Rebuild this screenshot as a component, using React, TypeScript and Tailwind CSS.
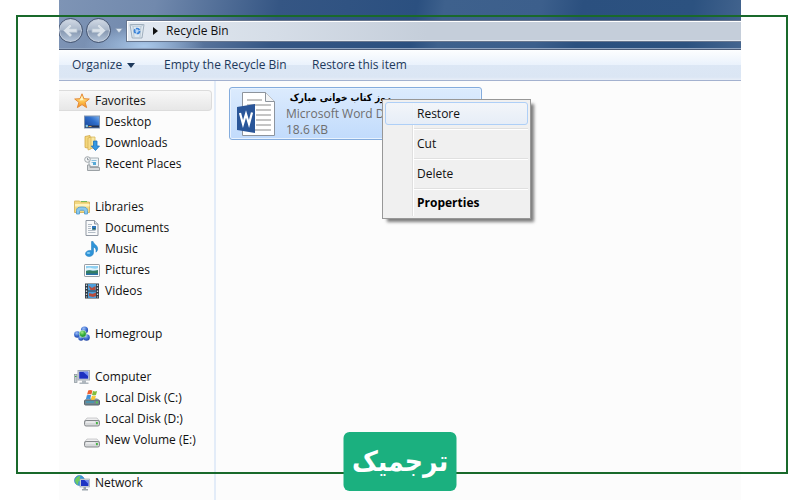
import type { ReactNode } from 'react';

function Svg({ children, size = 16 }: { children: ReactNode; size?: number }) {
  return (
    <svg width={size} height={size} viewBox="0 0 16 16" aria-hidden="true" className="shrink-0">
      {children}
    </svg>
  );
}

const StarIcon = () => (
  <Svg>
    <defs>
      <linearGradient id="star" x1="0" y1="0" x2="0" y2="1">
        <stop offset="0" stopColor="#fff0a0" />
        <stop offset="0.6" stopColor="#fdc04a" />
        <stop offset="1" stopColor="#f28a1c" />
      </linearGradient>
    </defs>
    <path d="M8 .8l1.900 4.900 5.400.3-4.200 3.300 1.500 5.300L8 11.600l-4.600 3L4.900 9.300.7 6l5.400-.3z" fill="url(#star)" stroke="#e58a35" strokeLinejoin="round" />
    <path d="M8 3l1.200 3.700 3 .2-6.700.6z" fill="#fff6c4" />
  </Svg>
);

const DesktopIcon = () => (
  <Svg>
    <defs>
      <linearGradient id="desk" x1="0" y1="1" x2="1" y2="0">
        <stop offset="0" stopColor="#173f91" />
        <stop offset="0.6" stopColor="#2f6fcc" />
        <stop offset="1" stopColor="#7cb2ee" />
      </linearGradient>
    </defs>
    <rect x=".5" y="2" width="15" height="12" fill="url(#desk)" stroke="#8295b0" />
    <path d="M1 11.500h14v2H1z" fill="#26344f" />
    <circle cx="2.800" cy="12" r="1.300" fill="#7fc6e8" />
    <path d="M4.500 12.500h3" stroke="#d3a45a" />
  </Svg>
);

const DownloadsIcon = () => (
  <Svg>
    <path d="M1 1.500l5-1v13l-5-1z" fill="#f3d67b" stroke="#d0a746" strokeWidth=".8" />
    <path d="M6 2h5v11l-5 .5z" fill="#f9e8a4" stroke="#d8b75c" strokeWidth=".8" />
    <path d="M4 3l3-1v12l-3 1z" fill="#f7dc8a" stroke="#d0a746" strokeWidth=".6" />
    <path d="M9.500 6h3.500v5h2.500L11.500 15.500 7.300 11h2.200z" fill="#3597e2" stroke="#1e6eb8" strokeWidth=".8" />
  </Svg>
);

const RecentIcon = () => (
  <Svg>
    <path d="M5 2h9.500v8.500H5z" fill="#eef4f7" stroke="#a5adb2" />
    <path d="M7.500 4.500h5M7.500 6.500h3" stroke="#8bc0dd" />
    <rect x="9" y="6" width="3" height="3" fill="#55a9d6" />
    <path d="M3.500 9v5.500h12v-3H6V9z" fill="#d7dadc" stroke="#9ba1a5" />
    <circle cx="3.500" cy="3.500" r="2.800" fill="#f4f6f7" stroke="#a0a6aa" />
    <path d="M3.500 1.800v2h1.700" fill="none" stroke="#77818a" strokeWidth=".8" />
  </Svg>
);

const LibrariesIcon = () => (
  <Svg>
    <path d="M.5 2.500V2h5l1 1h9v10.500H.5z" fill="#f4d981" stroke="#cfac50" strokeWidth=".8" />
    <path d="M1 5h14.500v2.500H1z" fill="#fff2bd" />
    <path d="M7 2.500h6" stroke="#75b957" />
    <path d="M2.500 15v-3.500c0-2.600 2-3.500 5.500-3.500s5.500.9 5.500 3.500V15h-3v-2.500c0-1-.6-1.300-2.500-1.300s-2.500.3-2.500 1.300V15z" fill="#8cc8ed" stroke="#4c99cc" strokeWidth=".8" />
  </Svg>
);

const DocumentIcon = () => (
  <Svg>
    <path d="M2 .5h8.500L14 4v11.500H2z" fill="#f9fafb" stroke="#9198a3" />
    <path d="M10.500.5V4H14" fill="#dbe2eb" stroke="#9198a3" />
    <path d="M4 4.500h4M4 6.500h3M4 8.500h3M4 10.500h7.500M4 12.500h7.500" stroke="#b4bdc7" />
    <rect x="8" y="6" width="4" height="3.500" fill="#2f76bb" />
    <path d="M8 9.500l2-1.500 2 1.500z" fill="#225b30" />
  </Svg>
);

const MusicIcon = () => (
  <Svg>
    <path d="M7.500.5h1.600c.2 2.700 4.900 3.700 4.600 7.500-.1 1.500-1 2.600-1.800 3.200.6-2.700-.4-4.400-2.400-5.300v5.600c0 2.300-1.700 4-4.400 4C3 15.500 1.500 14.500 1.500 12.800c0-2 2-3.400 4.300-3.400.6 0 1.200.1 1.700.3z" fill="#2f94d8" stroke="#1a76bb" strokeWidth=".5" />
    <ellipse cx="4.500" cy="12" rx="1.800" ry="1" fill="#86cdf4" />
  </Svg>
);

const PicturesIcon = () => (
  <Svg>
    <rect x=".5" y="2.500" width="15" height="12" rx=".6" fill="#fdfdfd" stroke="#999fa6" />
    <path d="M2 4h12v9H2z" fill="#8fd0f2" />
    <path d="M2 6.500c4-2 8 1.500 12-.5v2.500H2z" fill="#e1f3fa" />
    <path d="M2 9c4-2 6 1 12-1v5H2z" fill="#347d64" />
    <path d="M2 11.500h12V13H2z" fill="#286fa8" />
  </Svg>
);

const VideosIcon = () => (
  <Svg>
    <rect x="1" y=".5" width="14" height="15" fill="#303a44" />
    <path d="M4 1h8v6.500H4zM4 8.500h8V15H4z" fill="#4b9dda" />
    <path d="M4.500 2.500L8 5l3.500-2v4h-5zM5 10l3.500 1L12 9.500V13l-3 1-4-1z" fill="#b64c3b" />
    <path d="M2.500 1.500v13M13.500 1.500v13" stroke="#d2d9de" strokeWidth="1.300" strokeDasharray="1.500 1.500" />
  </Svg>
);

const HomegroupIcon = () => (
  <Svg>
    <defs>
      <radialGradient id="hgb" cx=".4" cy=".3" r=".8">
        <stop offset="0" stopColor="#9dc0f8" />
        <stop offset=".5" stopColor="#3f6fd0" />
        <stop offset="1" stopColor="#1b3a98" />
      </radialGradient>
      <radialGradient id="hgg" cx=".4" cy=".3" r=".8">
        <stop offset="0" stopColor="#a6ee86" />
        <stop offset=".5" stopColor="#35ae3c" />
        <stop offset="1" stopColor="#0f7a20" />
      </radialGradient>
    </defs>
    <circle cx="10.500" cy="4" r="3.600" fill="url(#hgb)" />
    <circle cx="3.300" cy="8.500" r="3.200" fill="url(#hgb)" />
    <circle cx="12.500" cy="11.500" r="3.300" fill="url(#hgb)" />
    <circle cx="7" cy="12" r="2.700" fill="url(#hgb)" />
    <circle cx="8.800" cy="7.800" r="3.600" fill="url(#hgg)" stroke="#e4f4fa" strokeWidth=".6" />
  </Svg>
);

const ComputerIcon = () => (
  <Svg>
    <rect x=".5" y="5.500" width="2.500" height="8" fill="#c3cbd0" stroke="#89939b" strokeWidth=".7" />
    <path d="M1 7.500h1.500" stroke="#3aad46" />
    <rect x="4" y="1.500" width="11.500" height="9.500" fill="#d5dadf" stroke="#a1a9b2" />
    <rect x="5.200" y="2.700" width="9" height="7" fill="#1d2fc0" />
    <path d="M9 2.700h5.200v4.500z" fill="#6f8af0" />
    <path d="M8 11.500h4v2h2.500V15h-9v-1.500H8z" fill="#aeb6bd" />
  </Svg>
);

const DiskIcon = () => (
  <Svg>
    <path d="M3 7h10l2.500 3H.5z" fill="#eeeeef" stroke="#aeb0b2" strokeWidth=".6" />
    <rect x=".5" y="9.500" width="15" height="5.500" rx="1.600" fill="#d6d8da" stroke="#85888b" />
    <path d="M2 11h9" stroke="#f9f9f9" />
    <rect x="12" y="11" width="1.800" height="2.200" fill="#46b343" />
  </Svg>
);

const SystemDiskIcon = () => (
  <Svg>
    <path d="M3 8h10l2.500 2.500H.5z" fill="#b9c6ce" />
    <rect x=".5" y="10" width="15" height="5" rx="1" fill="#74868f" stroke="#57656d" />
    <path d="M2 12h8" stroke="#3f97b8" strokeWidth="1.500" />
    <rect x="12" y="11.500" width="1.800" height="1.800" fill="#51d14a" />
    <path d="M4.200.6c1.700-.9 2.900-.6 4.200 0L7.400 4.600c-1.400-.7-2.700-.7-4.300 0z" fill="#ed6131" />
    <path d="M9 1c1.400.6 2.600.6 4.100 0L12 5c-1.400.6-2.600.6-4 0z" fill="#82bd3b" />
    <path d="M2.900 5.300c1.500-.8 2.900-.7 4.200 0l-1 3.900c-1.400-.7-2.600-.7-4.200 0z" fill="#3f91d9" />
    <path d="M7.900 5.700c1.300.6 2.600.6 4 0l-1 3.900c-1.400.6-2.700.6-4 0z" fill="#fac735" />
  </Svg>
);

const NetworkIcon = () => (
  <Svg>
    <circle cx="5.500" cy="5.500" r="5" fill="#3999dc" stroke="#2874b4" strokeWidth=".6" />
    <path d="M1 5c1-3 3.500-4.300 5.500-4l-1 2.500 2 1.500-3 1.500-.5 3.500C2.500 9 1 7.500 1 5z" fill="#6dcb62" />
    <rect x="6" y="4" width="9.500" height="8" fill="#d6dce2" stroke="#99a5b1" strokeWidth=".7" />
    <rect x="7" y="5" width="7.500" height="6" fill="#1d35c4" />
    <path d="M10.500 5h4v4z" fill="#738cef" />
    <path d="M9.500 12h2.500v2h2v1.500H8V14h1.500z" fill="#9aa3ac" />
  </Svg>
);

const BinIcon = () => (
  <Svg>
    <path d="M1 1.500h14l-2 13.500H3.200z" fill="#dfe9f1" stroke="#8f9fae" strokeWidth=".8" />
    <path d="M1 1.500l3 1.700h8l3-1.700M4 3.200L5 14M12 3.200L11 14" fill="none" stroke="#b0bfcb" strokeWidth=".8" />
    <circle cx="8" cy="8" r="2.500" fill="#b9d6f4" stroke="#3b83d8" strokeWidth="1.700" strokeDasharray="4.200 1" />
  </Svg>
);

function WordFile() {
  return (
    <svg width="40" height="46" viewBox="0 0 40 46" aria-hidden="true" className="shrink-0">
      <path d="M6.500 1.500h23l9 9v34h-32z" fill="#fff" stroke="#8d949d" />
      <path d="M29.500 1.500v9h9" fill="#f2f4f6" stroke="#8d949d" />
      <path d="M11 9h15M11 14h24M20 19h15M20 24h15M20 29h15M20 34h15M11 39h24" stroke="#8b8b8b" strokeWidth="1.200" />
      <path d="M1 16l18-3v29l-18-3z" fill="#2a5699" />
      <path d="M4 22l3 11 3-10 3 10 3-11.500" fill="none" stroke="#fff" strokeWidth="2.200" />
    </svg>
  );
}

function NavArrow({ label, flip }: { label: string; flip?: boolean }) {
  return (
    <button aria-label={label} className="grid size-[25px] shrink-0 place-items-center rounded-full border border-[#43536f] bg-[linear-gradient(#d3dbe6_0%,#a9b7ca_48%,#8798b1_52%,#b4c5da_100%)] shadow-[inset_0_0_0_1px_#c0cbda]">
      <svg width="17" height="15" viewBox="0 0 17 15" aria-hidden="true" className={flip ? 'rotate-180' : ''}>
        <path d="M8 1L1.500 7.500 8 14l2-2-2.500-2.700H15V5.700H7.500L10 3z" fill="#dbe2ea" stroke="#b4c1d1" strokeWidth=".8" />
      </svg>
    </button>
  );
}

const groups: { name: string; icon: ReactNode; items: [string, ReactNode][] }[] = [
  {
    name: 'Favorites',
    icon: <StarIcon />,
    items: [
      ['Desktop', <DesktopIcon />],
      ['Downloads', <DownloadsIcon />],
      ['Recent Places', <RecentIcon />],
    ],
  },
  {
    name: 'Libraries',
    icon: <LibrariesIcon />,
    items: [
      ['Documents', <DocumentIcon />],
      ['Music', <MusicIcon />],
      ['Pictures', <PicturesIcon />],
      ['Videos', <VideosIcon />],
    ],
  },
  { name: 'Homegroup', icon: <HomegroupIcon />, items: [] },
  {
    name: 'Computer',
    icon: <ComputerIcon />,
    items: [
      ['Local Disk (C:)', <SystemDiskIcon />],
      ['Local Disk (D:)', <DiskIcon />],
      ['New Volume (E:)', <DiskIcon />],
    ],
  },
  { name: 'Network', icon: <NetworkIcon />, items: [] },
];

function Sidebar() {
  return (
    <nav className="flex w-[157px] shrink-0 flex-col gap-[22px] border-r-2 border-[#e3ecf8] pt-[9px] pr-0.5">
      {groups.map((group) => (
        <div key={group.name}>
          <button
            className={
              group.name === 'Favorites'
                ? 'flex h-[21px] w-full items-center gap-[5px] rounded-r-sm border border-l-0 border-[#dcdcdc] bg-linear-to-b from-[#f8f8f8] to-[#e7e7e7] pl-[15px]'
                : 'flex h-[21px] w-full items-center gap-[5px] pl-[15px]'
            }
          >
            {group.icon}
            {group.name}
          </button>
          {group.items.map(([name, icon]) => (
            <button key={name} className="flex h-[21px] w-full items-center gap-[5px] pl-[25px] whitespace-nowrap">
              {icon}
              {name}
            </button>
          ))}
        </div>
      ))}
    </nav>
  );
}

function ContextMenu() {
  return (
    <div
      role="menu"
      className="absolute top-[18px] left-[166px] w-[149px] border border-[#979797] bg-[#f0f0f0] p-0.5 text-[#111] shadow-[4px_4px_3px_-1px_rgba(0,0,0,0.5)]"
    >
      <div className="bg-[linear-gradient(to_right,transparent_27px,#e0e0e0_27px,#e0e0e0_28px,#fff_28px,#fff_29px,transparent_29px)]">
        <button role="menuitem" className="block h-[23px] w-full rounded-[3px] border border-[#aecff7] bg-linear-to-b from-[#f3f6fa]/90 to-[#e5edf8]/90 pl-[31px] text-left">
          Restore
        </button>
        <hr className="mt-[3px] ml-[29px] h-0.5 border-0 border-t border-t-[#e0e0e0] bg-white" />
        <button role="menuitem" className="block h-7 w-full pl-8 text-left">Cut</button>
        <hr className="ml-[29px] h-0.5 border-0 border-t border-t-[#e0e0e0] bg-white" />
        <button role="menuitem" className="block h-7 w-full pl-8 text-left">Delete</button>
        <hr className="ml-[29px] h-0.5 border-0 border-t border-t-[#e0e0e0] bg-white" />
        <button role="menuitem" className="block h-[26px] w-full pl-8 text-left font-bold text-black">Properties</button>
      </div>
    </div>
  );
}

export default function App() {
  return (
    <div className="relative h-screen overflow-hidden bg-white px-[59px] font-['Open_Sans','Noto_Sans',sans-serif] text-[12px] leading-4 text-[#111]">
      <div className="flex h-full flex-col overflow-hidden bg-[#fcfcfc]">
        <header className="flex h-[50px] shrink-0 items-end border-b border-[#4f5e78] bg-[radial-gradient(ellipse_60px_20px_at_85px_46px,#a9c8ea_0%,transparent_100%),linear-gradient(100deg,#7e94b5_0%,#7189ad_14%,#355684_32%,#2b5080_52%,#3e618d_56%,#3c5f8c_70%,#2b507f_76%,#2c5280_92%,#44658f_100%)] shadow-[inset_0_-1px_0_#91a5c1]">
          <div className="flex w-full items-center pb-[6px]">
            <div className="-ml-px flex shrink-0 gap-[3px]">
              <NavArrow label="Back" />
              <NavArrow label="Forward" flip />
            </div>
            <button aria-label="Recent pages" className="w-[15px] shrink-0">
              <svg width="8" height="6" viewBox="0 0 8 6" aria-hidden="true" className="mx-auto">
                <path d="M.5.500h7L4 5z" fill="#dce5f0" stroke="#8295b0" strokeWidth=".6" />
              </svg>
            </button>
            <div className="flex h-[22px] flex-1 items-center border border-r-0 border-[#66758d] bg-[#c8d1de] bg-[linear-gradient(to_right,#e2e9f1_0px,#d5dde7_150px,#c5ceda_300px)] pl-0.5 shadow-[inset_1px_1px_0_#fff,inset_0_-1px_0_#e0e6ee]">
              <BinIcon />
              <svg width="5" height="8" viewBox="0 0 5 8" aria-hidden="true" className="ml-2 shrink-0">
                <path d="M0 0l5 4-5 4z" fill="#111" />
              </svg>
              <button className="ml-2">Recycle Bin</button>
            </div>
          </div>
        </header>
        <div className="flex h-[31px] shrink-0 items-center border-b border-[#a3b1cf] bg-[linear-gradient(#fdfeff_0%,#eaf2fc_49%,#dce7f5_50%,#dbe6f4_90%,#e8eef8_100%)] pl-[13px] text-[#1e395b]">
          <button className="flex w-[92px] items-center gap-[5px]">
            Organize
            <svg width="8" height="5" viewBox="0 0 8 5" aria-hidden="true">
              <path d="M0 0h8L4 5z" fill="#1e395b" />
            </svg>
          </button>
          <button className="w-[148px] text-left whitespace-nowrap">Empty the Recycle Bin</button>
          <button className="whitespace-nowrap">Restore this item</button>
        </div>
        <div className="flex min-h-0 flex-1">
          <Sidebar />
          <main className="relative flex-1 pt-1.5 pl-[13px]">
            <div className="flex h-[53px] w-[253px] items-center gap-2.5 rounded-[3px] border border-[#84acdd] bg-linear-to-b from-[#dcebfd] to-[#c1dbfc] pl-1.5 shadow-[inset_0_0_0_1px_#e8f2fe]">
              <WordFile />
              <div className="text-[#6d6d6d]">
                <div lang="fa" dir="rtl" className="w-[105px] font-['DejaVu_Sans_Condensed','DejaVu_Sans',sans-serif] text-[10px] font-bold whitespace-nowrap text-black">روز کتاب خوانی مبارک</div>
                <div className="whitespace-nowrap">Microsoft Word Document</div>
                <div>18.6 KB</div>
              </div>
            </div>
            <ContextMenu />
          </main>
        </div>
      </div>
      <div className="pointer-events-none absolute top-[15px] right-3 bottom-[26px] left-4 border-2 border-[#19692b]" />
      <div lang="fa" dir="rtl" className="absolute bottom-[9px] left-1/2 grid h-[59px] w-[113px] -translate-x-1/2 place-items-center rounded-md bg-[#1bb07f] font-['DejaVu_Sans_Condensed','DejaVu_Sans',sans-serif] text-[28px] leading-10 font-bold text-white">
        ترجمیک
      </div>
    </div>
  );
}
